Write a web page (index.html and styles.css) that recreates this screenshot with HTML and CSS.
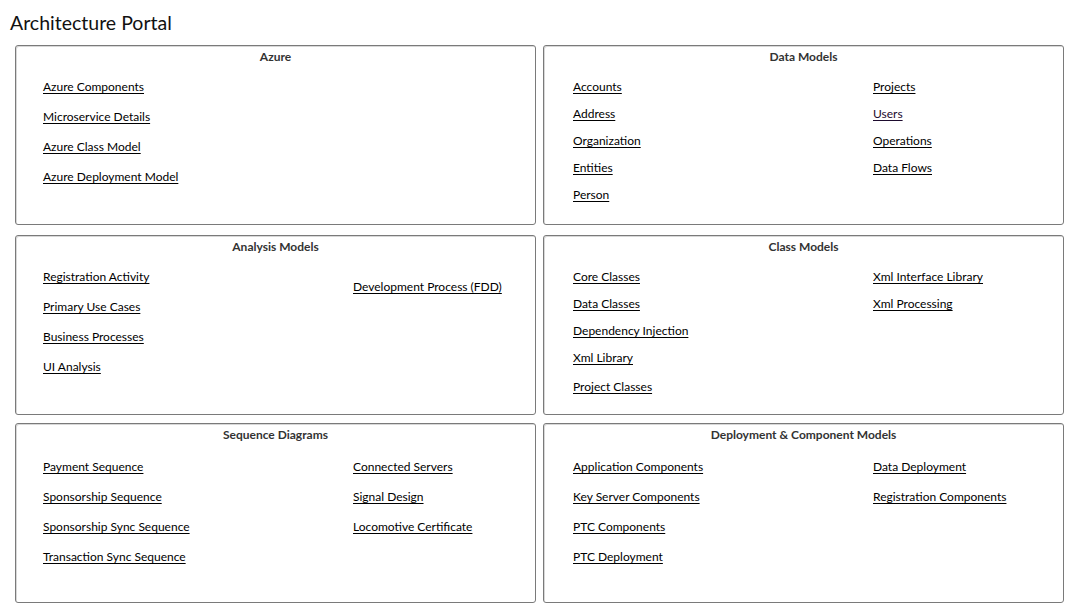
FILE: index.html
```html
<!DOCTYPE html>
<html>
<head>
<meta charset="utf-8">
<title>Architecture Portal</title>
<link rel="stylesheet" href="styles.css">
</head>
<body>
<h1 class="title">Architecture Portal</h1>
<div class="grid">
  <section class="box">
    <div class="box-head">Azure</div>
    <div class="cols cols-left">
      <div class="list loose">
        <a href="#">Azure Components</a>
        <a href="#">Microservice Details</a>
        <a href="#">Azure Class Model</a>
        <a href="#">Azure Deployment Model</a>
      </div>
    </div>
  </section>
  <section class="box">
    <div class="box-head">Data Models</div>
    <div class="cols cols-right">
      <div class="list tight">
        <a href="#">Accounts</a>
        <a href="#">Address</a>
        <a href="#">Organization</a>
        <a href="#">Entities</a>
        <a href="#">Person</a>
      </div>
      <div class="list tight">
        <a href="#">Projects</a>
        <a href="#" class="visited">Users</a>
        <a href="#">Operations</a>
        <a href="#">Data Flows</a>
      </div>
    </div>
  </section>
  <section class="box row-mid">
    <div class="box-head">Analysis Models</div>
    <div class="cols cols-left">
      <div class="list loose">
        <a href="#">Registration Activity</a>
        <a href="#">Primary Use Cases</a>
        <a href="#">Business Processes</a>
        <a href="#">UI Analysis</a>
      </div>
      <div class="list loose offset">
        <a href="#">Development Process (FDD)</a>
      </div>
    </div>
  </section>
  <section class="box row-mid">
    <div class="box-head">Class Models</div>
    <div class="cols cols-right">
      <div class="list tight">
        <a href="#">Core Classes</a>
        <a href="#">Data Classes</a>
        <a href="#">Dependency Injection</a>
        <a href="#">Xml Library</a>
        <a href="#" class="extra">Project Classes</a>
      </div>
      <div class="list tight">
        <a href="#">Xml Interface Library</a>
        <a href="#">Xml Processing</a>
      </div>
    </div>
  </section>
  <section class="box row-bot">
    <div class="box-head">Sequence Diagrams</div>
    <div class="cols cols-left">
      <div class="list loose">
        <a href="#">Payment Sequence</a>
        <a href="#">Sponsorship Sequence</a>
        <a href="#">Sponsorship Sync Sequence</a>
        <a href="#">Transaction Sync Sequence</a>
      </div>
      <div class="list loose">
        <a href="#">Connected Servers</a>
        <a href="#">Signal Design</a>
        <a href="#">Locomotive Certificate</a>
      </div>
    </div>
  </section>
  <section class="box row-bot">
    <div class="box-head">Deployment &amp; Component Models</div>
    <div class="cols cols-right">
      <div class="list loose">
        <a href="#">Application Components</a>
        <a href="#">Key Server Components</a>
        <a href="#">PTC Components</a>
        <a href="#">PTC Deployment</a>
      </div>
      <div class="list loose">
        <a href="#">Data Deployment</a>
        <a href="#">Registration Components</a>
      </div>
    </div>
  </section>
</div>
</body>
</html>
```
FILE: styles.css
```css
html, body {
  margin: 0;
  padding: 0;
  background: #ffffff;
}
body {
  font-family: Lato, "Open Sans", "Liberation Sans", sans-serif;
  color: #000;
  padding: 10px 10px 0 10px;
}
.title {
  margin: 0;
  font-size: 19.5px;
  font-weight: 400;
  line-height: 26px;
  height: 35px;
  color: #111;
}
.grid {
  margin-left: 5px;
  display: grid;
  grid-template-columns: 521px 521px;
  grid-template-rows: 180px 180px 180px;
  column-gap: 7px;
  row-gap: 9px;
}
.box {
  border: 1px solid #7a7a7a;
  border-radius: 3px;
  box-shadow: inset 1px 1px 0 #d8d8d8;
  box-sizing: border-box;
}
.row-mid {
  margin-top: 1px;
  margin-bottom: -1px;
}
.box-head {
  text-align: center;
  font-weight: 700;
  font-size: 12px;
  line-height: 16px;
  color: #333;
  padding-top: 3px;
}
.cols {
  display: grid;
  padding: 14px 0 0 27px;
}
.row-bot .cols {
  padding-top: 16px;
}
.cols-right {
  padding-left: 29px;
}
.cols-left {
  grid-template-columns: 310px 1fr;
}
.cols-right {
  grid-template-columns: 300px 1fr;
}
.list {
  display: flex;
  flex-direction: column;
  align-items: flex-start;
}
.list a {
  color: #000;
  font-size: 12px;
  line-height: 16px;
  text-decoration: underline;
  text-underline-offset: 2px;
}
.list a.visited {
  color: #1d0b2e;
}
.loose {
  gap: 14px;
}
.tight {
  gap: 11px;
}
.offset {
  padding-top: 10px;
}
.list a.extra {
  margin-top: 2px;
}
```
